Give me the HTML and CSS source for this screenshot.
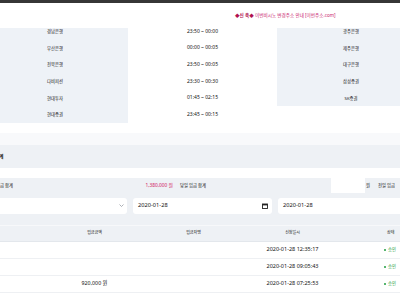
FILE: index.html
```html
<!DOCTYPE html>
<html lang="ko">
<head>
    <meta charset="UTF-8">
    <meta name="viewport" content="width=device-width, initial-scale=1.0">
    <title>입금 신청</title>
    <link rel="stylesheet" href="styles.css">
</head>
<body>
    <div class="topbar"></div>
    <div class="notice"><span class="notice__mark">◆신 축◆</span> 이번비시노 변경주소 안내 [이번주소.com]</div>

    <div class="hours">
        <div class="hours__bank">경남은행</div>
        <div class="hours__time">23:50 ~ 00:00</div>
        <div class="hours__bank">광주은행</div>

        <div class="hours__bank">부산은행</div>
        <div class="hours__time">00:00 ~ 00:05</div>
        <div class="hours__bank">제주은행</div>

        <div class="hours__bank">전북은행</div>
        <div class="hours__time">23:50 ~ 00:05</div>
        <div class="hours__bank">대구은행</div>

        <div class="hours__bank">다비피션</div>
        <div class="hours__time">23:30 ~ 00:30</div>
        <div class="hours__bank">삼성증권</div>

        <div class="hours__bank">현대투자</div>
        <div class="hours__time">01:45 ~ 02:15</div>
        <div class="hours__bank">SK증권</div>

        <div class="hours__bank">현대증권</div>
        <div class="hours__time">23:45 ~ 00:15</div>
        <div class="hours__empty"></div>
    </div>

    <div class="band"></div>
    <div class="title"><span class="title__text">입금 신청 합계</span></div>
    <div class="spacer"></div>

    <div class="summary">
        <div class="summary__label summary__label--first">입금 합계</div>
        <div class="summary__value">1,380,000 원</div>
        <div class="summary__label summary__label--mid">당일 입금 합계</div>
        <div class="summary__box"></div>
        <div class="summary__unit">원</div>
        <div class="summary__label">전일 입금</div>
    </div>

    <div class="filters">
        <div class="field field--select">
            <span></span>
            <svg class="field__chev" width="5" height="3" viewBox="0 0 5 3"><path d="M.5 .5 2.5 2.5 4.5 .5" fill="none" stroke="#8a8f98" stroke-width=".7"/></svg>
        </div>
        <div class="field">
            <span class="field__date">2020-01-28</span>
            <svg class="field__cal" width="6" height="6" viewBox="0 0 6 6"><rect x=".5" y="1" width="5" height="4.5" fill="none" stroke="#222" stroke-width=".9"/><rect x=".5" y="1" width="5" height="1.4" fill="#222"/></svg>
        </div>
        <div class="field">
            <span class="field__date">2020-01-28</span>
        </div>
    </div>

    <div class="list">
        <div class="list__head">
            <div></div>
            <div>입금금액</div>
            <div>입금자명</div>
            <div>신청일시</div>
            <div class="list__state">상태</div>
        </div>
        <div class="list__row">
            <div></div>
            <div></div>
            <div></div>
            <div class="list__date">2020-01-28 12:35:17</div>
            <div class="status"><span class="status__dot"></span>승인</div>
        </div>
        <div class="list__row">
            <div></div>
            <div></div>
            <div></div>
            <div class="list__date">2020-01-28 09:05:43</div>
            <div class="status"><span class="status__dot"></span>승인</div>
        </div>
        <div class="list__row">
            <div></div>
            <div class="list__amount">920,000 원</div>
            <div></div>
            <div class="list__date">2020-01-28 07:25:53</div>
            <div class="status"><span class="status__dot"></span>승인</div>
        </div>
    </div>
</body>
</html>
```

FILE: styles.css
```css
body {
    position: relative;
    overflow: hidden;
    margin: 0;
    height: 300px;
    background: #fff;
    color: #111;
    font-family: "Noto Sans", "Noto Sans CJK KR", sans-serif;
    font-size: 4.3px;
    line-height: 1;
}

.topbar {
    height: 3px;
    background: #363636;
}

.notice {
    position: absolute;
    top: 3px;
    left: 0;
    right: 0;
    height: 25px;
    padding-left: 235px;
    background: #fff;
    color: #c8176a;
    font-size: 4.6px;
    line-height: 25px;
}

.notice__mark {
    font-weight: 700;
    color: #b0104f;
}

/* bank maintenance hours */
.hours {
    display: grid;
    grid-template-columns: 146px 149px 148px;
    grid-auto-rows: 16.6px;
    margin: 20px 0 0 -18px;
}

.hours > div {
    display: flex;
    align-items: center;
    justify-content: center;
}

.hours__bank {
    background: #eef2f7;
    font-size: 4.3px;
}

.hours__time {
    font-size: 5px;
}

.band {
    height: 12px;
    margin-top: 10px;
    background: #f8f9fb;
}

.title {
    display: flex;
    align-items: center;
    height: 23px;
    background: #eef1f5;
}

.title__text {
    flex: none;
    width: 40px;
    margin-left: -36.5px;
    text-align: right;
    font-size: 4.5px;
    font-weight: 700;
}

.spacer {
    height: 10px;
}

.summary {
    display: flex;
    align-items: center;
    height: 15px;
    margin-left: -30px;
    background: #eef1f5;
}

.summary__label {
    flex: none;
    white-space: nowrap;
}

.summary__label--first {
    width: 43px;
    text-align: right;
}

.summary__label--mid {
    width: 151px;
    padding-left: 5px;
}

.summary__value {
    flex: none;
    width: 160px;
    padding-right: 2px;
    text-align: right;
    color: #d11561;
    font-size: 4.8px;
}

.summary__box {
    flex: none;
    align-self: stretch;
    width: 34px;
    background: #fff;
}

.summary__unit {
    flex: none;
    width: 12px;
    padding-left: 1px;
}

.filters {
    display: flex;
    gap: 6px;
    padding: 5px 0 11px;
    margin-left: -12px;
    background: #eef1f5;
}

.field {
    flex: none;
    display: flex;
    align-items: center;
    justify-content: space-between;
    box-sizing: border-box;
    width: 139px;
    height: 16px;
    padding: 0 4px 0 5px;
    border-radius: 3px;
    background: #fff;
}

.field__date {
    font-size: 5.7px;
}

.field__chev {
    margin-right: -1px;
}

.list__head,
.list__row {
    display: grid;
    grid-template-columns: 45px repeat(3, 99px) 58px;
}

.list__head {
    height: 15px;
    border-top: 1px solid #f7f8fa;
    border-bottom: 1px solid #e3e7ec;
    background: #eef1f5;
    font-size: 4px;
}

.list__row {
    height: 16px;
    border-bottom: 1px solid #eef0f3;
}

.list__head > div,
.list__row > div {
    display: flex;
    align-items: center;
    justify-content: center;
}

.list__head > .list__state,
.list__row > .status {
    justify-content: flex-start;
    padding-left: 42px;
}

.list__head > .list__state {
    padding-left: 45px;
}

.list__date {
    font-size: 5.5px;
}

.list__amount {
    font-size: 5.3px;
}

.status {
    color: #1f9d3f;
    font-size: 4.3px;
}

.status__dot {
    width: 2px;
    height: 2px;
    margin-right: 2px;
    border-radius: 50%;
    background: #1f9d3f;
}
```
